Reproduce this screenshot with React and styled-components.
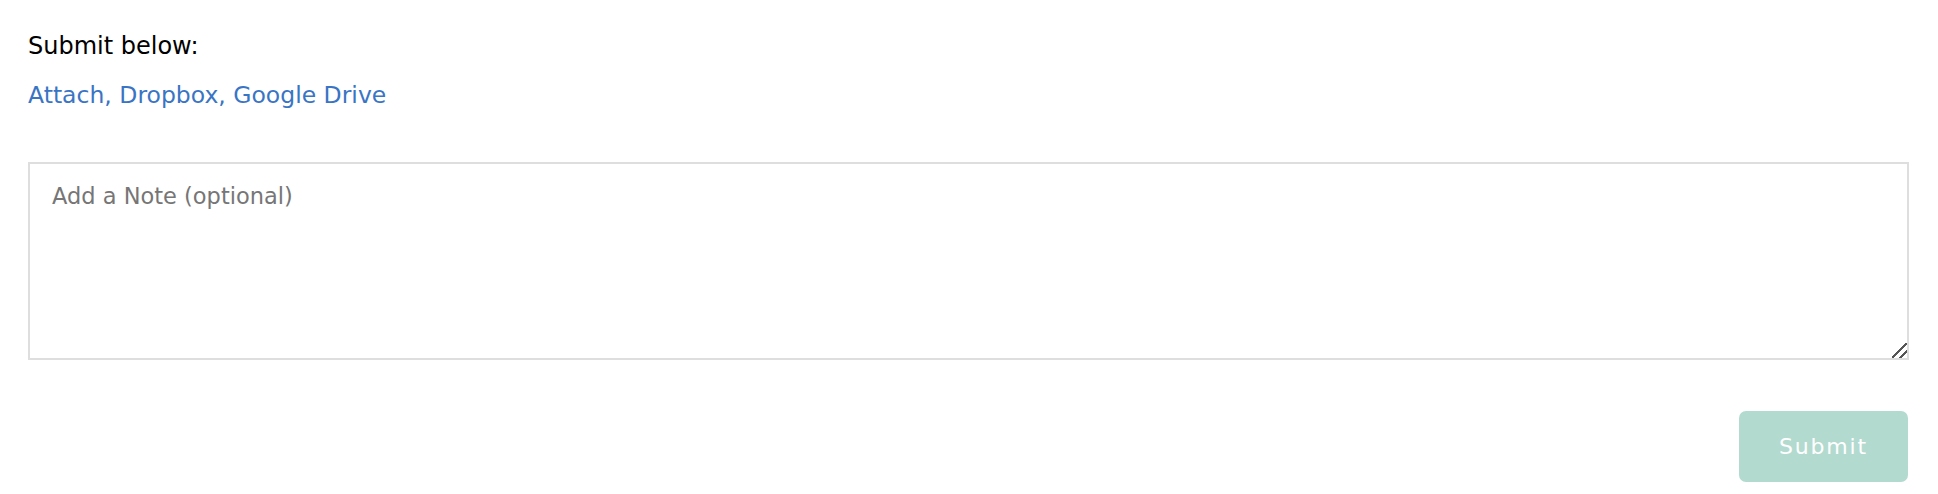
import React from 'react';
import styled, { createGlobalStyle } from 'styled-components';

const GlobalStyle = createGlobalStyle`
  body {
    margin: 0;
    background: #ffffff;
    font-family: "DejaVu Sans", "Liberation Sans", sans-serif;
  }
`;

const App = () => {
  return (
    <>
      <GlobalStyle />
      <SubmitContainer>
        <SubmitTitle>Submit below:</SubmitTitle>
        <SourceLinks>
          <SourceLink href="#">Attach</SourceLink>,{' '}
          <SourceLink href="#">Dropbox</SourceLink>,{' '}
          <SourceLink href="#">Google Drive</SourceLink>
        </SourceLinks>
        <NoteInput placeholder="Add a Note (optional)" />
        <Actions>
          <SubmitButton disabled>Submit</SubmitButton>
        </Actions>
      </SubmitContainer>
    </>
  );
};

const SubmitContainer = styled.div`
  display: flex;
  flex-direction: column;
  padding: 31px 29px 12px 28px;
`;

const SubmitTitle = styled.div`
  font-size: 24px;
  line-height: 30px;
  color: #000000;
`;

const SourceLinks = styled.div`
  margin-top: 19px;
  font-size: 23.5px;
  line-height: 30px;
  color: #3a74c4;
`;

const SourceLink = styled.a`
  color: #3a74c4;
  text-decoration: none;
`;

const NoteInput = styled.textarea`
  box-sizing: border-box;
  margin-top: 52px;
  width: 100%;
  height: 198px;
  padding: 17px 22px 11px;
  border: 2px solid #dedede;
  border-radius: 0;
  font-family: "DejaVu Sans", "Liberation Sans", sans-serif;
  font-size: 22.5px;
  line-height: 30px;
  color: #333333;
  resize: vertical;
  outline: none;

  &::placeholder {
    color: #767676;
  }

  &::-webkit-scrollbar {
    width: 16px;
    height: 16px;
  }

  &::-webkit-resizer {
    background: linear-gradient(
      135deg,
      transparent 0 46%,
      #555555 46% 55%,
      transparent 55% 72%,
      #555555 72% 81%,
      transparent 81%
    );
  }
`;

const Actions = styled.div`
  display: flex;
  justify-content: flex-end;
  margin-top: 51px;
  padding-right: 1px;
`;

const SubmitButton = styled.button`
  width: 169px;
  height: 71px;
  border: none;
  border-radius: 7px;
  background: #b3dacf;
  color: #ffffff;
  font-family: "DejaVu Sans", "Liberation Sans", sans-serif;
  font-size: 22px;
  letter-spacing: 1.8px;
  cursor: not-allowed;
`;

export default App;
